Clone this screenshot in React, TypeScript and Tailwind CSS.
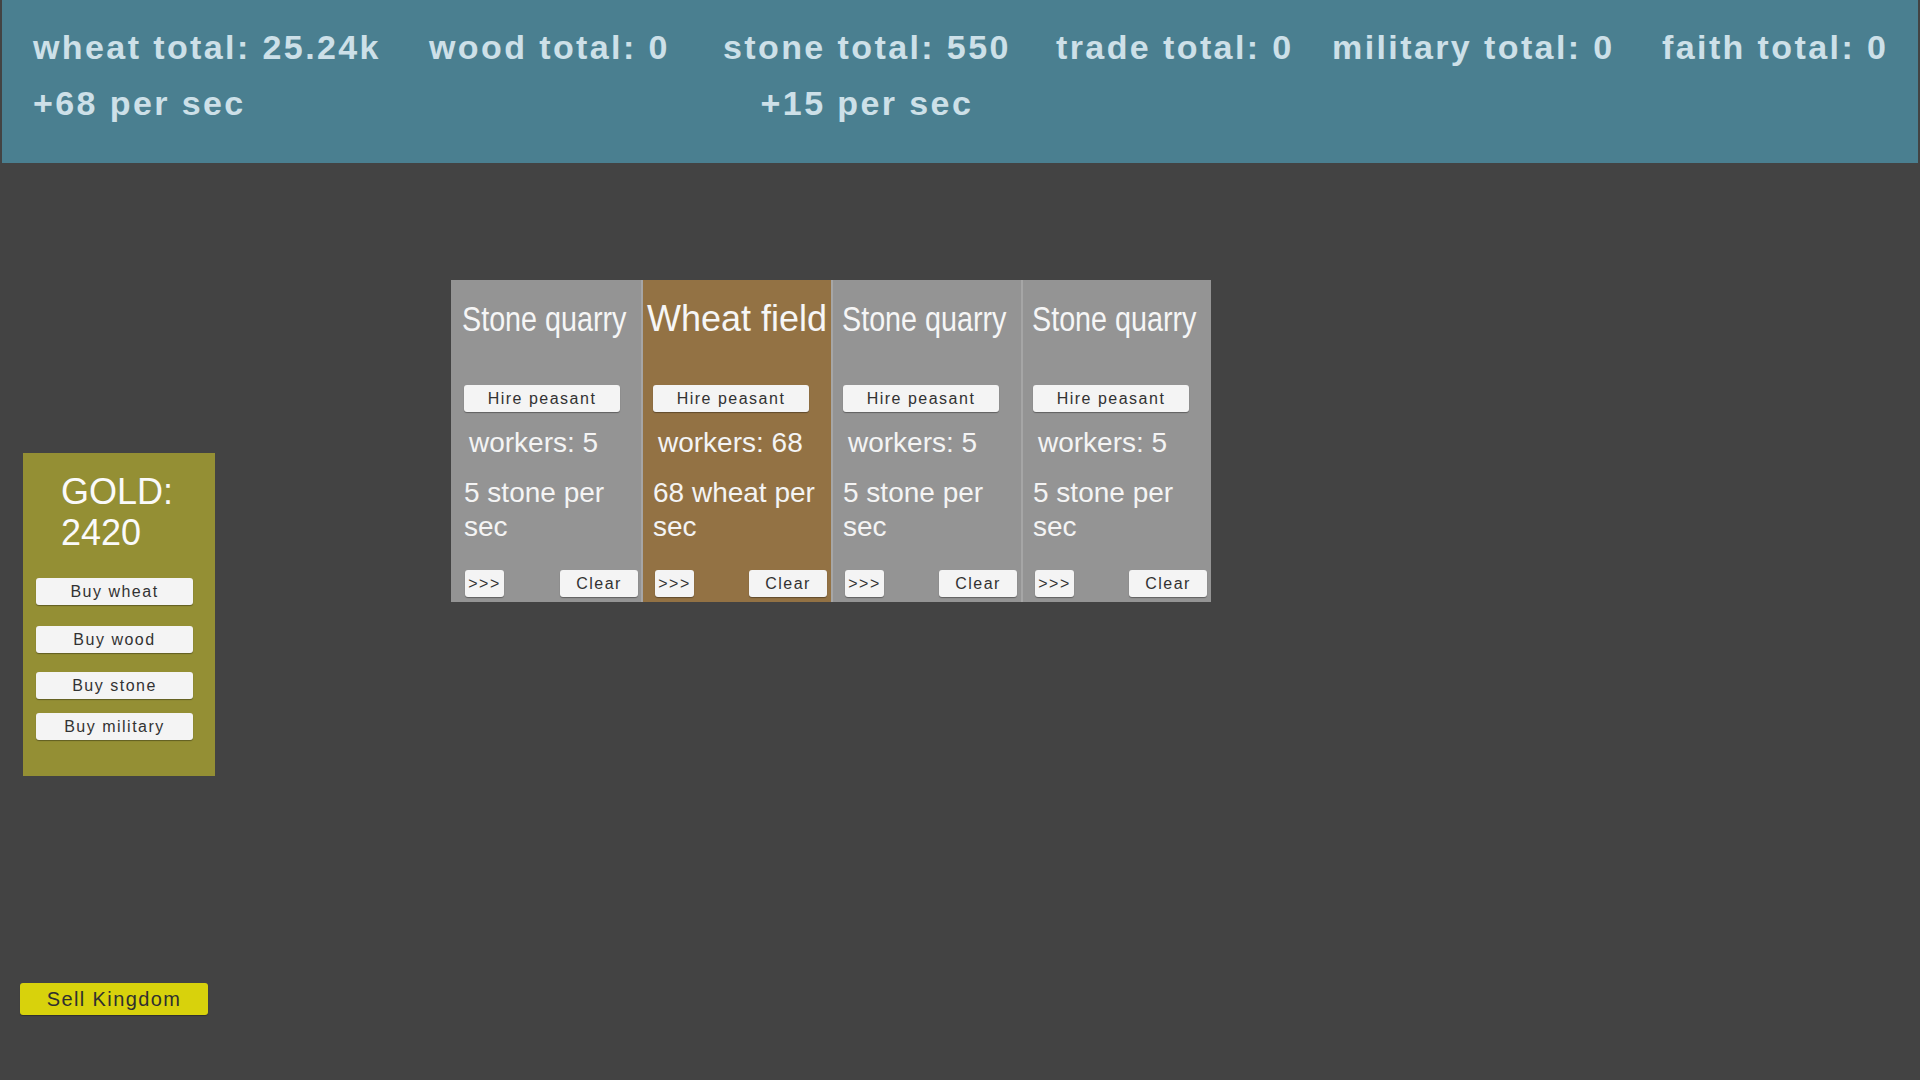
import React from "react";

const sans = { fontFamily: '"Liberation Sans", Arial, sans-serif' } as const;

function Btn({ label, className = "" }: { label: string; className?: string }) {
  return (
    <div
      className={`flex items-center justify-center bg-[#f4f4f4] text-[#323232] text-[16px] tracking-[1.5px] rounded-[3px] shadow-[0_1px_1px_rgba(0,0,0,0.35)] ${className}`}
    >
      {label}
    </div>
  );
}

type Card = { title: string; wheat?: boolean; workers: number; rate: string };

const cards: Card[] = [
  { title: "Stone quarry", workers: 5, rate: "5 stone per sec" },
  { title: "Wheat field", wheat: true, workers: 68, rate: "68 wheat per sec" },
  { title: "Stone quarry", workers: 5, rate: "5 stone per sec" },
  { title: "Stone quarry", workers: 5, rate: "5 stone per sec" },
];

function BuildingCard({ c, first }: { c: Card; first: boolean }) {
  return (
    <div
      className={`w-[190px] h-[322px] flex flex-col pt-[19px] pb-[5px] ${c.wheat ? "bg-[#937244]" : "bg-[#949494]"} ${first ? "" : "border-l-2 border-[#a6a6a6]"}`}
    >
      {c.wheat ? (
        <div className="h-[40px] leading-[40px] text-center whitespace-nowrap text-[#f6f6f6] text-[36px] -ml-[3px] -mr-[3px]">
          {c.title}
        </div>
      ) : (
        <div className={`h-[40px] leading-[40px] flex justify-center whitespace-nowrap text-[#f6f6f6] text-[35px] ${first ? "pr-[4px]" : "pr-[6px]"}`}>
          <span className="shrink-0 inline-block scale-x-[0.82] origin-center">{c.title}</span>
        </div>
      )}
      <Btn label="Hire peasant" className={`mt-[46px] h-[27px] w-[156px] ${first ? "ml-[13px]" : "ml-[10px]"}`} />
      <div className={`mt-[14px] text-[28px] leading-[34px] text-[#f4f4f4] ${first ? "ml-[18px]" : "ml-[15px]"}`}>
        workers: {c.workers}
      </div>
      <div className={`mt-[16px] pr-[2px] text-[28px] leading-[34px] text-[#f4f4f4] ${first ? "ml-[13px]" : "ml-[10px]"}`}>
        {c.rate}
      </div>
      <div className="mt-auto flex items-end">
        <Btn label=">>>" className={`h-[27px] w-[39px] rounded-[1px] ${first ? "ml-[14px]" : "ml-[12px]"}`} />
        <Btn label="Clear" className={`h-[27px] w-[78px] ${first ? "ml-[56px]" : "ml-[55px]"}`} />
      </div>
    </div>
  );
}

function HeaderCol({ total, per, w, center }: { total: string; per?: string; w: string; center?: boolean }) {
  return (
    <div className={w}>
      <div className={`w-fit flex flex-col ${center ? "items-center" : "items-start"}`}>
        <div className="whitespace-nowrap">{total}</div>
        {per && <div className="whitespace-nowrap">{per}</div>}
      </div>
    </div>
  );
}

export default function App() {
  return (
    <div className="w-[1920px] h-[1080px] bg-[#434343] flex flex-col overflow-hidden" style={sans}>
      <header className="mx-[2px] h-[163px] bg-[#4a7f90] flex pl-[31px] pt-[19px] text-[34px] font-bold tracking-[2.4px] leading-[56px] text-[#cde0e8]">
        <HeaderCol w="w-[396px]" total="wheat total: 25.24k" per="+68 per sec" />
        <HeaderCol w="w-[294px]" total="wood total: 0" />
        <HeaderCol w="w-[333px]" total="stone total: 550" per="+15 per sec" center />
        <HeaderCol w="w-[276px]" total="trade total: 0" />
        <HeaderCol w="w-[330px]" total="military total: 0" />
        <HeaderCol w="w-[240px]" total="faith total: 0" />
      </header>
      <div className="flex flex-1">
        <div className="w-[215px] flex flex-col items-start">
          <div className="mt-[290px] ml-[23px] w-[192px] h-[323px] bg-[#948f34] flex flex-col">
            <div className="mt-[18px] ml-[38px] text-[36px] leading-[41px] text-[#fafafa]">
              GOLD:
              <br />
              2420
            </div>
            <Btn label="Buy wheat" className="mt-[25px] ml-[13px] w-[157px] h-[27px]" />
            <Btn label="Buy wood" className="mt-[21px] ml-[13px] w-[157px] h-[27px]" />
            <Btn label="Buy stone" className="mt-[19px] ml-[13px] w-[157px] h-[27px]" />
            <Btn label="Buy military" className="mt-[14px] ml-[13px] w-[157px] h-[27px]" />
          </div>
          <div className="mt-[207px] ml-[20px] w-[188px] h-[32px] rounded-[3px] bg-[#d8d20c] flex items-center justify-center text-[20px] tracking-[1.4px] text-[#2f2f2f] shadow-[0_1px_1px_rgba(0,0,0,0.3)]">
            Sell Kingdom
          </div>
        </div>
        <div className="ml-[236px] mt-[117px] flex items-start self-start">
          {cards.map((c, i) => (
            <BuildingCard key={i} c={c} first={i === 0} />
          ))}
        </div>
      </div>
    </div>
  );
}
